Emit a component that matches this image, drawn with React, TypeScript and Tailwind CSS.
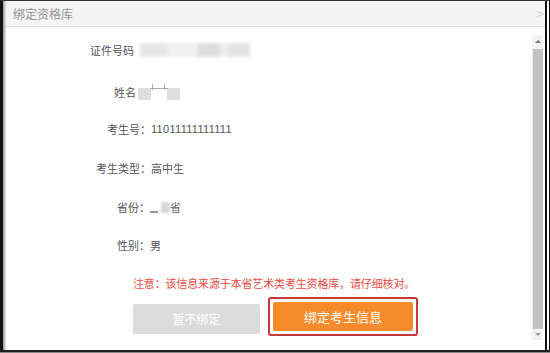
import React from 'react';

const font = { fontFamily: '"Microsoft YaHei", "Noto Sans CJK SC", "Liberation Sans", sans-serif' };

const Row: React.FC<{ label: string; labelW: string; mt: string; children?: React.ReactNode }> = ({
  label,
  labelW,
  mt,
  children,
}) => (
  <div className={`flex items-center h-4 leading-4 text-[11px] text-[#555] ${mt}`}>
    <span className={`${labelW} text-right shrink-0`}>{label}</span>
    {children}
  </div>
);

export default function App() {
  return (
    <div className="w-[550px] h-[353px] bg-[#111] flex flex-col overflow-hidden" style={font}>
      <div className="h-px bg-[#333] shrink-0" />
      <div className="flex-1 flex min-h-0">
        {/* 左边框阴影 */}
        <div className="w-[3px] bg-[#141414]" />
        <div className="w-[3px] bg-gradient-to-r from-[#9a9a9a] to-[#e6e6e6]" />

        {/* 弹窗主体 */}
        <div className="flex-1 flex flex-col bg-white min-w-0">
          {/* 标题栏 */}
          <div className="h-[26px] shrink-0 flex items-center justify-between bg-[#f4f4f4] border-b border-[#dedede] pl-[7px] pr-[1px]">
            <span className="text-[12px] text-[#949494]">绑定资格库</span>
            <span className="text-[13px] text-[#cfcfcf] leading-none">&gt;</span>
          </div>

          <div className="flex-1 flex min-h-0">
            {/* 内容 */}
            <div className="flex-1 flex flex-col">
              <Row label="证件号码" labelW="w-[128px]" mt="mt-[15px]">
                <div className="ml-[6px] flex items-center h-[14px] w-[110px] blur-[1.5px]">
                  <div className="h-full w-[28px] bg-[#e6e6e6]" />
                  <div className="h-full w-[30px] bg-[#f0f0f0]" />
                  <div className="h-full w-[22px] bg-[#dedede]" />
                  <div className="h-full w-[8px] bg-[#eeeeee]" />
                  <div className="h-full w-[22px] bg-[#e4e4e4]" />
                </div>
              </Row>
              <Row label="姓名" labelW="w-[130px]" mt="mt-[26px]">
                <div className="ml-[2px] relative w-[48px] h-[16px]">
                  <div className="absolute left-0 top-[4px] w-[13px] h-[12px] bg-[#dedede] blur-[0.6px]" />
                  <div className="absolute left-[29px] top-[4px] w-[13px] h-[12px] bg-[#dedede] blur-[0.6px]" />
                  <div className="absolute left-[12px] top-[4px] w-[18px] h-px bg-[#aaa]" />
                  <div className="absolute left-[14px] top-0 w-px h-[6px] bg-[#aaa]" />
                  <div className="absolute left-[26px] top-0 w-px h-[6px] bg-[#aaa]" />
                </div>
              </Row>
              <Row label="考生号：" labelW="w-[145px]" mt="mt-[21px]">
                <span className="tracking-[0.3px]" style={{ fontFamily: '"Liberation Sans", sans-serif' }}>
                  11011111111111
                </span>
              </Row>
              <Row label="考生类型：" labelW="w-[145px]" mt="mt-[23px]">
                <span>高中生</span>
              </Row>
              <Row label="省份：" labelW="w-[144px]" mt="mt-[23px]">
                <div className="flex items-end h-[12px] w-[11px]">
                  <div className="w-[8px] h-[2px] bg-[#999]" />
                </div>
                <div className="w-[9px] h-[11px] bg-[#d8d8d8] blur-[1px]" />
                <span className="text-[#666]">省</span>
              </Row>
              <Row label="性别：" labelW="w-[144px]" mt="mt-[22px]">
                <span>男</span>
              </Row>

              <p className="mt-[22px] ml-[127px] h-4 leading-4 text-[11px] text-[#ea4a3f] tracking-[-0.15px]">
                注意：该信息来源于本省艺术类考生资格库，请仔细核对。
              </p>

              <div className="mt-[6px] ml-[127px] flex items-center">
                <button className="mt-[4px] w-[127px] h-[30px] bg-[#dcdcdc] text-white text-[12px] rounded-[2px]">
                  暂不绑定
                </button>
                <div className="ml-[8px] p-[3px] border-2 border-[#c4373a] rounded-[3px]">
                  <button className="w-[140px] h-[29px] bg-[#f78a2b] text-white text-[13px] rounded-[2px]">
                    绑定考生信息
                  </button>
                </div>
              </div>
            </div>

            {/* 滚动条 */}
            <div className="w-[11px] mr-[2px] mt-[8px] mb-[10px] bg-[#f2f2f2] flex flex-col items-center">
              <span className="mt-[5px] w-0 h-0 border-l-[3px] border-r-[3px] border-b-[3px] border-l-transparent border-r-transparent border-b-[#777]" />
              <div className="mt-[6px] flex-1 w-[10px] bg-[#c2c2c2]" />
              <span className="mt-[4px] mb-[4px] w-0 h-0 border-l-[3px] border-r-[3px] border-t-[3px] border-l-transparent border-r-transparent border-t-[#999]" />
            </div>
          </div>
        </div>

        {/* 右边框 */}
        <div className="w-[2px] bg-[#111]" />
        <div className="w-[2px] bg-white" />
        <div className="w-px bg-[#111]" />
      </div>
      <div className="h-[2px] bg-[#222] shrink-0" />
      <div className="h-px bg-[#888] shrink-0" />
    </div>
  );
}
